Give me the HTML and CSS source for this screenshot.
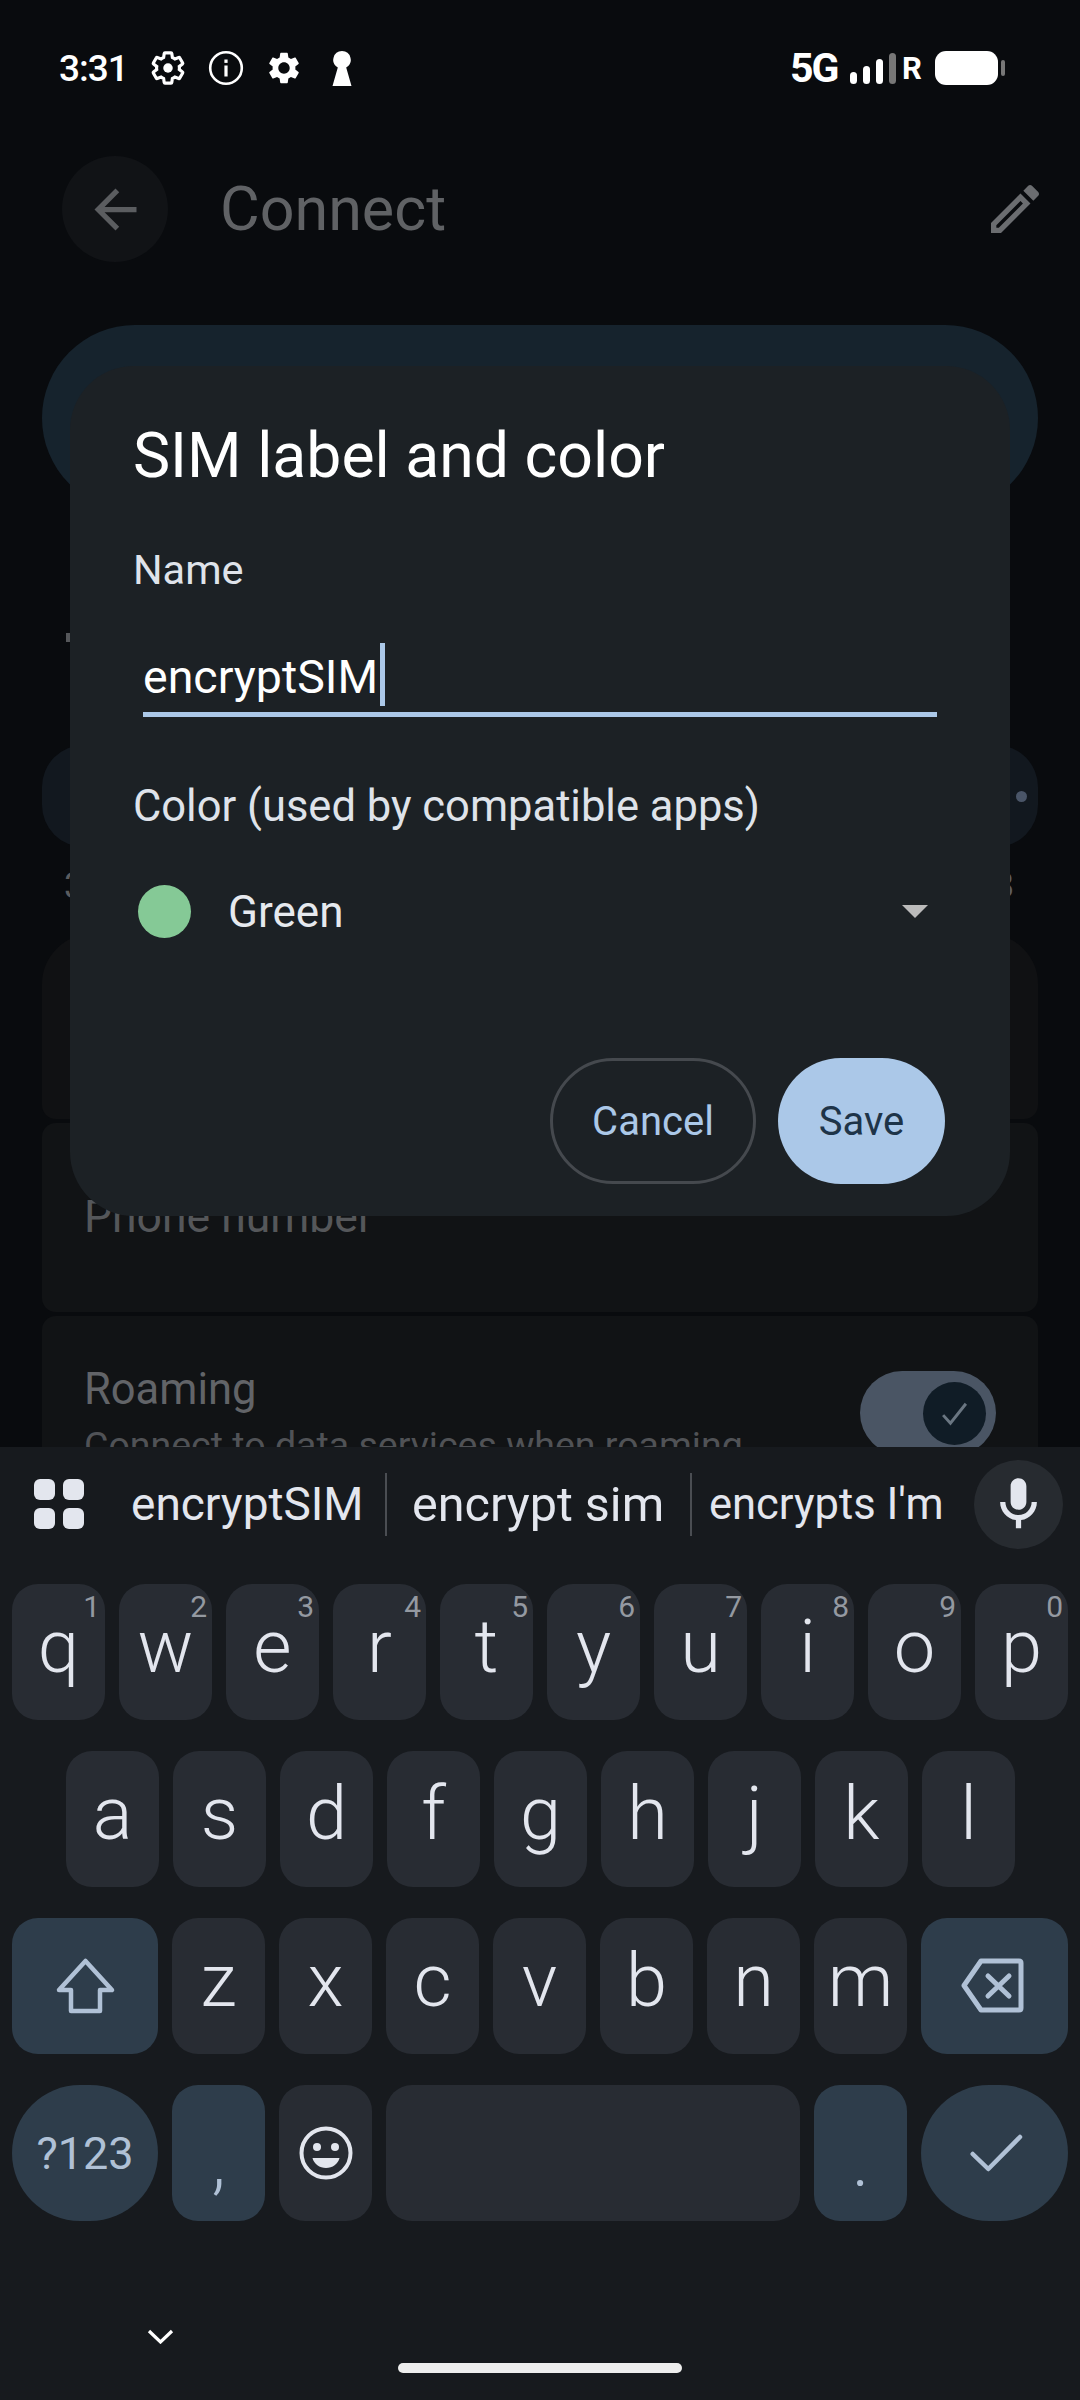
FILE: index.html
```html
<!DOCTYPE html>
<html lang="en">

<head>
    <meta charset="UTF-8">
    <title>SIM label and color</title>
    <link rel="stylesheet" href="styles.css">
</head>

<body>
    <div class="screen">

        <div class="status-bar">
            <span class="status-time">3:31</span>
            <svg class="status-icon gear-line" viewBox="0 0 24 24"><path d="M19.14 12.94c.04-.3.06-.61.06-.94 0-.32-.02-.64-.07-.94l2.03-1.58c.18-.14.23-.41.12-.61l-1.92-3.32c-.12-.22-.37-.29-.59-.22l-2.39.96c-.5-.38-1.03-.7-1.62-.94L14.4 2.81c-.04-.24-.24-.41-.48-.41h-3.84c-.24 0-.43.17-.47.41L9.25 5.35c-.59.24-1.13.57-1.62.94l-2.39-.96c-.22-.08-.47 0-.59.22L2.74 8.87c-.12.21-.08.47.12.61l2.03 1.58c-.05.3-.09.63-.09.94s.02.64.07.94l-2.03 1.58c-.18.14-.23.41-.12.61l1.92 3.32c.12.22.37.29.59.22l2.39-.96c.5.38 1.03.7 1.62.94l.36 2.54c.05.24.24.41.48.41h3.84c.24 0 .44-.17.47-.41l.36-2.54c.59-.24 1.13-.56 1.62-.94l2.39.96c.22.08.47 0 .59-.22l1.92-3.32c.12-.22.07-.47-.12-.61l-2.01-1.58z" fill="none" stroke="#fff" stroke-width="2"/><circle cx="12" cy="12" r="3" fill="#fff"/></svg>
            <svg class="status-icon info" viewBox="0 0 36 36"><circle cx="18" cy="18" r="15.8" fill="none" stroke="#fff" stroke-width="2.6"/><rect x="16.4" y="15.5" width="3.2" height="11" fill="#fff"/><rect x="16.4" y="9.5" width="3.2" height="3.4" fill="#fff"/></svg>
            <svg class="status-icon gear-solid" viewBox="0 0 24 24"><path fill="#fff" fill-rule="evenodd" d="M19.14 12.94c.04-.3.06-.61.06-.94 0-.32-.02-.64-.07-.94l2.03-1.58c.18-.14.23-.41.12-.61l-1.92-3.32c-.12-.22-.37-.29-.59-.22l-2.39.96c-.5-.38-1.03-.7-1.62-.94L14.4 2.81c-.04-.24-.24-.41-.48-.41h-3.84c-.24 0-.43.17-.47.41L9.25 5.35c-.59.24-1.13.57-1.62.94l-2.39-.96c-.22-.08-.47 0-.59.22L2.74 8.87c-.12.21-.08.47.12.61l2.03 1.58c-.05.3-.09.63-.09.94s.02.64.07.94l-2.03 1.58c-.18.14-.23.41-.12.61l1.92 3.32c.12.22.37.29.59.22l2.39-.96c.5.38 1.03.7 1.62.94l.36 2.54c.05.24.24.41.48.41h3.84c.24 0 .44-.17.47-.41l.36-2.54c.59-.24 1.13-.56 1.62-.94l2.39.96c.22.08.47 0 .59-.22l1.92-3.32c.12-.22.07-.47-.12-.61l-2.01-1.58zM12 15.6c-1.98 0-3.6-1.62-3.6-3.6s1.62-3.6 3.6-3.6 3.6 1.62 3.6 3.6-1.62 3.6-3.6 3.6z"/></svg>
            <svg class="status-icon keyhole" viewBox="0 0 20 35"><path fill="#fff" d="M10 0a8.8 8.8 0 0 1 4.2 16.5L19.5 35H.5l5.3-18.5A8.8 8.8 0 0 1 10 0z"/></svg>

            <div class="status-right">
                <span class="status-net">5G</span>
                <div class="signal">
                    <i class="bar-1"></i>
                    <i class="bar-2"></i>
                    <i class="bar-3"></i>
                    <i class="bar-4"></i>
                </div>
                <span class="status-roam">R</span>
                <div class="battery"></div>
                <div class="battery-cap"></div>
            </div>
        </div>

        <div class="app-bar">
            <div class="back-btn">
                <svg viewBox="0 0 24 24"><path fill="#5b5d60" d="M20 11H7.83l5.59-5.59L12 4l-8 8 8 8 1.41-1.41L7.83 13H20v-2z"/></svg>
            </div>
            <span class="app-title">Connect</span>
            <svg class="edit-icon" viewBox="0 0 24 24"><path fill="#6b6d70" d="M14.06 9.02l.92.92L5.92 19H5v-.92l9.06-9.06M17.66 3c-.25 0-.51.1-.7.29l-1.83 1.83 3.75 3.75 1.83-1.83c.39-.39.39-1.02 0-1.41l-2.34-2.34c-.2-.2-.45-.29-.71-.29zm-3.6 3.19L3 17.25V21h3.75L17.81 9.94l-3.75-3.75z"/></svg>
        </div>

        <div class="settings">
            <div class="sim-card"></div>
            <div class="section-mark"></div>
            <div class="pager-card"><span class="pager-dot"></span></div>
            <div class="usage-row"><span>3</span><span>8</span></div>
            <div class="list-card list-first"></div>
            <div class="list-card list-phone"><span class="list-title">Phone number</span></div>
            <div class="list-card list-roaming">
                <div>
                    <div class="list-title list-title-strong">Roaming</div>
                    <div class="list-sub">Connect to data services when roaming</div>
                </div>
                <div class="switch">
                    <div class="switch-thumb">
                        <svg viewBox="0 0 24 24"><path d="M5 13l4.5 5L19 6" fill="none" stroke="#6a7682" stroke-width="1.8"/></svg>
                    </div>
                </div>
            </div>
        </div>

        <div class="keyboard">
            <div class="suggestions">
                <div class="apps-grid"><i></i><i></i><i></i><i></i></div>
                <span class="suggestion s-first">encryptSIM</span>
                <span class="suggestion s-second">encrypt sim</span>
                <span class="suggestion s-third">encrypts I'm</span>
                <div class="mic-btn">
                    <svg viewBox="0 0 24 24"><path fill="#e3e6ee" d="M12 14c1.66 0 3-1.34 3-3V5c0-1.66-1.34-3-3-3S9 3.34 9 5v6c0 1.66 1.34 3 3 3zM17 11c0 2.76-2.24 5-5 5s-5-2.24-5-5H5c0 3.53 2.61 6.43 6 6.92V21h2v-3.08c3.39-.49 6-3.39 6-6.92h-2z"/></svg>
                </div>
            </div>

            <div class="key-row">
                <div class="key">q<sup>1</sup></div>
                <div class="key">w<sup>2</sup></div>
                <div class="key">e<sup>3</sup></div>
                <div class="key">r<sup>4</sup></div>
                <div class="key">t<sup>5</sup></div>
                <div class="key">y<sup>6</sup></div>
                <div class="key">u<sup>7</sup></div>
                <div class="key">i<sup>8</sup></div>
                <div class="key">o<sup>9</sup></div>
                <div class="key">p<sup>0</sup></div>
            </div>
            <div class="key-row row-home">
                <div class="key">a</div>
                <div class="key">s</div>
                <div class="key">d</div>
                <div class="key">f</div>
                <div class="key">g</div>
                <div class="key">h</div>
                <div class="key">j</div>
                <div class="key">k</div>
                <div class="key">l</div>
            </div>
            <div class="key-row">
                <div class="key key-fn key-left key-icon">
                    <svg class="shift-icon" viewBox="0 0 65 60"><path d="M32.5 5L59 34H47V55H18V34H6z" fill="none" stroke="#b0c1d6" stroke-width="4.5" stroke-linejoin="round"/></svg>
                </div>
                <div class="key">z</div>
                <div class="key">x</div>
                <div class="key">c</div>
                <div class="key">v</div>
                <div class="key">b</div>
                <div class="key">n</div>
                <div class="key">m</div>
                <div class="key key-fn key-right key-icon">
                    <svg class="del-icon" viewBox="0 0 70 60"><path d="M21 5H59Q61 5 61 7V52Q61 54 59 54H21L4 29.5z" fill="none" stroke="#b0c1d6" stroke-width="5" stroke-linejoin="round"/><path d="M28 20L49 40M49 20L28 40" fill="none" stroke="#b0c1d6" stroke-width="5" stroke-linecap="round"/></svg>
                </div>
            </div>
            <div class="key-row">
                <div class="key key-fn key-left key-pill key-symbols">?123</div>
                <div class="key key-fn key-punct">,</div>
                <div class="key key-icon">
                    <svg class="emoji-icon" viewBox="0 0 56 56"><circle cx="28" cy="28" r="24.5" fill="none" stroke="#e3e6ee" stroke-width="4"/><circle cx="19" cy="22" r="4" fill="#e3e6ee"/><circle cx="37" cy="22" r="4" fill="#e3e6ee"/><path d="M14.5 33H41.500C40 39 34.500 43 28 43S16 39 14.500 33z" fill="#e3e6ee"/></svg>
                </div>
                <div class="key key-space"></div>
                <div class="key key-fn key-punct">.</div>
                <div class="key key-fn key-right key-pill key-icon">
                    <svg class="done-icon" viewBox="0 0 56 44"><path d="M5.700 23L21.300 38 53 6" fill="none" stroke="#b0c1d6" stroke-width="4.500" stroke-linecap="round" stroke-linejoin="round"/></svg>
                </div>
            </div>

            <svg class="kbd-hide" viewBox="0 0 27 15"><path d="M2 2L13.500 13 25 2" fill="none" stroke="#fff" stroke-width="3.200"/></svg>
            <div class="home-bar"></div>
        </div>

        <div class="dialog">
            <h2 class="dialog-title">SIM label and color</h2>
            <div class="field-label">Name</div>
            <div class="name-input">encryptSIM<span class="caret"></span></div>
            <div class="field-label color-label">Color (used by compatible apps)</div>
            <div class="color-select">
                <span class="color-dot"></span>
                <span class="color-name">Green</span>
                <span class="select-arrow"></span>
            </div>
            <div class="dialog-actions">
                <button class="btn btn-cancel">Cancel</button>
                <button class="btn btn-save">Save</button>
            </div>
        </div>

    </div>
</body>

</html>
```
FILE: styles.css
```css
body {
    margin: 0;
    font-family: Roboto, "Noto Sans", sans-serif;
}

.screen {
    position: relative;
    display: flex;
    flex-direction: column;
    width: 1080px;
    height: 2400px;
    overflow: hidden;
    background: #090b0e;
}

/* status bar */
.status-bar {
    display: flex;
    align-items: center;
    flex: none;
    height: 136px;
    padding: 0 75px 0 59px;
    color: #fff;
}

.status-time {
    width: 66px;
    font-size: 37px;
    font-weight: 500;
    letter-spacing: -1px;
}

.status-icon {
    flex: none;
}

.gear-line {
    width: 38px;
    height: 38px;
    margin-left: 24px;
}

.info {
    width: 36px;
    height: 36px;
    margin-left: 21px;
}

.gear-solid {
    width: 38px;
    height: 38px;
    margin-left: 21px;
}

.keyhole {
    width: 20px;
    height: 35px;
    margin-left: 29px;
}

.status-right {
    display: flex;
    align-items: center;
    margin-left: auto;
}

.status-net {
    width: 60px;
    font-size: 41px;
    font-weight: 700;
    letter-spacing: -2px;
}

.signal {
    display: flex;
    align-items: flex-end;
    gap: 6px;
    height: 32px;
}

.signal i {
    width: 7px;
    border-radius: 4px;
    background: #fff;
}

.bar-1 { height: 12px; }
.bar-2 { height: 18px; }
.bar-3 { height: 25px; }
.bar-4 { height: 31px; background: #777 !important; }

.status-roam {
    width: 39px;
    padding-left: 6px;
    box-sizing: border-box;
    font-size: 31px;
    font-weight: 700;
}

.battery {
    width: 63px;
    height: 34px;
    border-radius: 11px;
    background: #fff;
}

.battery-cap {
    width: 4px;
    height: 16px;
    margin-left: 3px;
    border-radius: 2px;
    background: #777;
}

/* app bar */
.app-bar {
    display: flex;
    align-items: center;
    flex: none;
    box-sizing: border-box;
    height: 189px;
    padding: 0 33px 43px 62px;
}

.back-btn {
    display: flex;
    align-items: center;
    justify-content: center;
    width: 106px;
    height: 106px;
    border-radius: 50%;
    background: #111316;
}

.back-btn svg {
    width: 63px;
    height: 63px;
}

.app-title {
    margin-left: 52px;
    font-size: 61px;
    color: #606265;
}

.edit-icon {
    width: 64px;
    height: 64px;
    margin-left: auto;
}

/* dimmed settings list behind the dialog */
.settings {
    flex: 1;
    min-height: 0;
    overflow: hidden;
    padding: 0 42px;
}

.sim-card {
    height: 186px;
    border-radius: 93px;
    background: #16232d;
}

.section-mark {
    width: 4px;
    height: 9px;
    margin: 122px 0 0 24px;
    background: #55575a;
}

.pager-card {
    display: flex;
    align-items: center;
    justify-content: flex-end;
    height: 102px;
    margin-top: 103px;
    padding-right: 11px;
    border-radius: 42px;
    background: #12181f;
}

.pager-dot {
    width: 11px;
    height: 11px;
    border-radius: 50%;
    background: #4a5568;
}

.usage-row {
    display: flex;
    justify-content: space-between;
    height: 42px;
    margin-top: 18px;
    padding: 0 24px 0 22px;
    font-size: 36px;
    line-height: 42px;
    color: #5a5c5f;
}

.list-card {
    box-sizing: border-box;
    margin-bottom: 4px;
    padding: 0 42px;
    border-radius: 14px;
    background: #111315;
}

.list-first {
    height: 185px;
    margin-top: 27px;
    border-radius: 50px 50px 14px 14px;
    background: #101113;
}

.list-phone {
    height: 189px;
    padding-top: 66px;
}

.list-title {
    font-size: 44.5px;
    line-height: 56px;
    color: #55575a;
}

.list-roaming {
    display: flex;
    justify-content: space-between;
    height: 200px;
    padding: 46px 42px 0;
}

.list-title-strong {
    font-size: 43.5px;
    font-weight: 450;
    color: #626468;
}

.list-sub {
    margin-top: 4px;
    font-size: 37.5px;
    line-height: 46px;
    color: #505256;
}

.switch {
    display: flex;
    align-items: center;
    justify-content: flex-end;
    width: 136px;
    height: 84px;
    margin-top: 9px;
    padding-right: 10px;
    box-sizing: border-box;
    border-radius: 42px;
    background: #4a5564;
}

.switch-thumb {
    width: 63px;
    height: 63px;
    border-radius: 50%;
    background: #101c26;
}

.switch-thumb svg {
    display: block;
    width: 39px;
    height: 39px;
    margin: 12px;
}

/* keyboard */
.keyboard {
    flex: none;
    box-sizing: border-box;
    height: 953px;
    background: #171a1e;
}

.suggestions {
    display: flex;
    align-items: center;
    height: 114px;
    margin-bottom: 23px;
}

.apps-grid {
    display: grid;
    grid-template-columns: 21px 21px;
    grid-auto-rows: 21px;
    gap: 8px;
    flex: none;
    margin: 0 47px 0 34px;
}

.apps-grid i {
    border-radius: 6px;
    background: #e3e6ee;
}

.suggestion {
    box-sizing: border-box;
    height: 63px;
    font-size: 46px;
    line-height: 63px;
    color: #e3e6ee;
    white-space: nowrap;
}

.s-first {
    width: 256px;
    border-right: 2px solid #4a4d52;
}

.s-second {
    width: 305px;
    padding-left: 25px;
    border-right: 2px solid #4a4d52;
    font-size: 48.5px;
}

.s-third {
    padding-left: 17px;
    font-size: 43.5px;
}

.mic-btn {
    display: flex;
    align-items: center;
    justify-content: center;
    width: 89px;
    height: 89px;
    margin: 0 17px 0 auto;
    border-radius: 50%;
    background: #272b30;
}

.mic-btn svg {
    width: 63px;
    height: 63px;
}

.key-row {
    display: flex;
    gap: 14px;
    margin-bottom: 31px;
    padding: 0 12px;
}

.row-home {
    padding-left: 66px;
}

.key {
    position: relative;
    display: flex;
    align-items: center;
    justify-content: center;
    flex: none;
    box-sizing: border-box;
    width: 93px;
    height: 136px;
    padding-bottom: 12px;
    border-radius: 26px;
    background: #282c33;
    font-size: 74px;
    font-weight: 300;
    color: #e3e6ee;
}

.key sup {
    position: absolute;
    top: 7px;
    right: 5px;
    font-size: 30px;
    font-weight: 400;
    line-height: 32px;
    color: #9499a1;
}

.key-fn {
    background: #2e3d4b;
    color: #b0c1d6;
}

.key-left {
    width: 146px;
}

.key-right {
    width: 147px;
}

.key-pill {
    border-radius: 68px;
}

.key-icon {
    padding-bottom: 0;
}

.key-symbols {
    padding-bottom: 0;
    font-size: 45px;
    font-weight: 400;
}

.key-punct {
    padding: 14px 0 0;
}

.key-space {
    width: 414px;
}

.shift-icon {
    width: 65px;
    height: 60px;
}

.del-icon {
    width: 70px;
    height: 60px;
}

.emoji-icon {
    width: 56px;
    height: 56px;
}

.done-icon {
    width: 56px;
    height: 44px;
}

.kbd-hide {
    display: block;
    width: 27px;
    height: 15px;
    margin: 108px 0 0 147px;
}

.home-bar {
    width: 284px;
    height: 10px;
    margin: 19px auto 0;
    border-radius: 5px;
    background: #eee;
}

/* dialog */
.dialog {
    position: absolute;
    top: 366px;
    left: 70px;
    box-sizing: border-box;
    width: 940px;
    height: 850px;
    padding: 54px 64px 0 63px;
    border-radius: 64px;
    background: #1c2125;
}

.dialog-title {
    margin: 0;
    font-size: 62.5px;
    font-weight: 400;
    line-height: 72px;
    color: #fff;
}

.field-label {
    margin-top: 53px;
    font-size: 41.5px;
    line-height: 50px;
    color: #dfe3ea;
}

.color-label {
    margin-top: 65px;
    font-size: 43.5px;
}

.name-input {
    display: flex;
    box-sizing: border-box;
    height: 71px;
    margin: 51px 9px 0 10px;
    border-bottom: 5px solid #abc8e8;
    font-size: 46.5px;
    line-height: 62px;
    color: #fff;
}

.caret {
    width: 5px;
    height: 63px;
    margin: -3px 0 0 2px;
    background: #abc8e8;
}

.color-select {
    display: flex;
    align-items: center;
    margin-top: 53px;
    padding: 0 18px 0 5px;
}

.color-dot {
    width: 53px;
    height: 53px;
    border-radius: 50%;
    background: #85c996;
}

.color-name {
    margin-left: 37px;
    font-size: 44px;
    color: #e6e9ee;
}

.select-arrow {
    width: 0;
    height: 0;
    margin-left: auto;
    border-top: 13px solid #bbb;
    border-left: 13px solid transparent;
    border-right: 13px solid transparent;
}

.dialog-actions {
    display: flex;
    justify-content: flex-end;
    gap: 22px;
    margin: 120px 1px 0 0;
}

.btn {
    box-sizing: border-box;
    height: 126px;
    padding: 0;
    border-radius: 63px;
    font-family: inherit;
    font-size: 40px;
    font-weight: 450;
}

.btn-cancel {
    width: 206px;
    border: 3px solid #45494e;
    background: none;
    color: #abc8e8;
}

.btn-save {
    width: 167px;
    border: none;
    background: #abc8e8;
    color: #1e3448;
}
```
